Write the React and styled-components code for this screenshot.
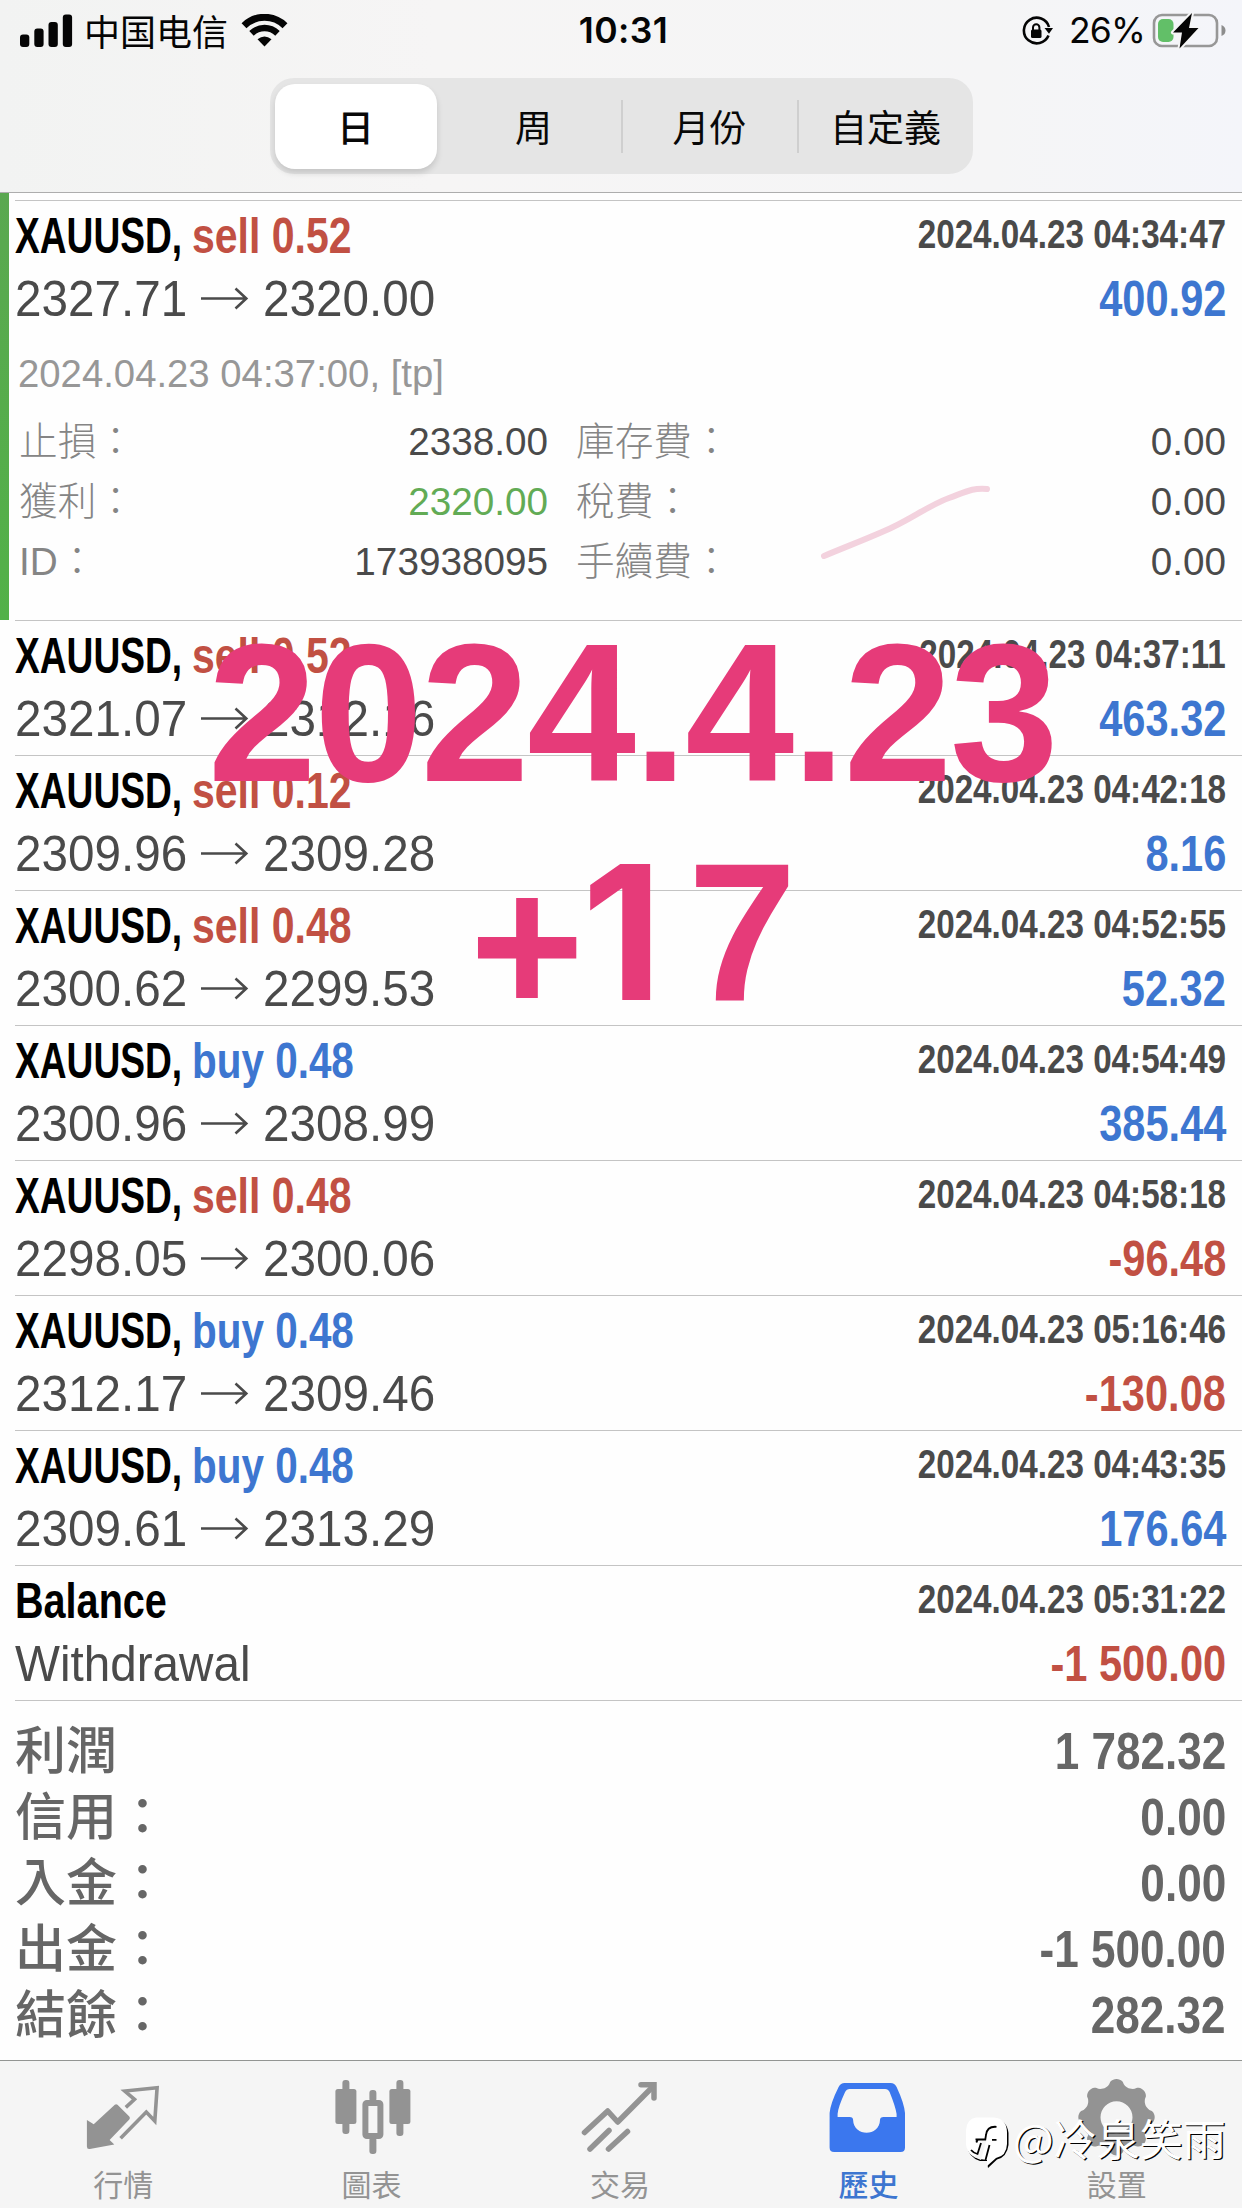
import React from 'react';
import styled, { createGlobalStyle } from 'styled-components';

const latin = '"Liberation Sans", Arial';
const TC = `${latin}, "Noto Sans CJK TC", sans-serif`;
const SC = `"Noto Sans CJK SC", ${latin}, sans-serif`;

const BLUE = '#3d76d0';
const RED = '#c15043';

const GlobalStyle = createGlobalStyle`
  * { box-sizing: border-box; }
  body { margin: 0; background: #fefefe; }
`;

const Screen = styled.main`
  position: relative;
  width: 1242px;
  height: 2208px;
  overflow: hidden;
  display: flex;
  flex-direction: column;
  background: #fefefe;
  color: #4a4a4a;
  font-family: ${TC};
  white-space: nowrap;
`;

const Header = styled.header`
  height: 193px;
  flex: none;
  background: linear-gradient(90deg, #f2f3f2 0%, #f6f5f5 35%, #f5f5f6 80%, #f4f5fa 100%);
  border-bottom: 1px solid #adadad;
`;

const StatusBar = styled.div`
  height: 62px;
  padding: 0 15px 0 20px;
  display: grid;
  grid-template-columns: 1fr auto 1fr;
  align-items: center;
  color: #050505;
`;

const StatusGroup = styled.div`
  display: flex;
  align-items: center;
  justify-content: ${(p) => (p.$end ? 'flex-end' : 'flex-start')};
`;

const Carrier = styled.span`
  font: 400 36px/60px ${SC};
  height: 62px;
  margin: 0 13px 0 11px;
`;

const Clock = styled.span`
  font: 600 35.5px/62px Inter, sans-serif;
  letter-spacing: 0.4px;
`;

const Percent = styled.span`
  font: 400 35.5px/62px Inter, sans-serif;
  letter-spacing: -0.8px;
  margin: 0 7px 0 16px;
`;

const SegmentWrap = styled.div`
  padding-top: 16px;
  display: flex;
  justify-content: center;
`;

const Segmented = styled.div`
  width: 703px;
  height: 96px;
  padding: 5px 0 5px 5px;
  display: flex;
  align-items: center;
  border-radius: 24px;
  background: #e5e5e5;
`;

const Segment = styled.button`
  height: 85px;
  flex: ${(p) => (p.$active ? '0 0 162px' : '1 1 0')};
  margin: ${(p) => (p.$active ? '0 10px 0 0' : '0')};
  border: 0;
  padding: 0;
  border-radius: 20px;
  background: ${(p) => (p.$active ? '#fff' : 'transparent')};
  box-shadow: ${(p) => (p.$active ? '0 4px 6px rgba(0,0,0,.14)' : 'none')};
  font: ${(p) => (p.$active ? 500 : 400)} 37px/81px "Noto Sans CJK TC", sans-serif;
  color: #080808;
`;

const Divider = styled.i`
  width: 2px;
  height: 53px;
  background: #cfcfcf;
`;

const History = styled.section`
  flex: none;
  padding-top: 7px;
`;

const Row = styled.article`
  margin-left: 15px;
  padding: 7px 16px 0 0;
  height: ${(p) => (p.$open ? 420 : 135)}px;
  border-top: 1px solid #c4c4c4;
`;

const Marker = styled.i`
  position: absolute;
  left: 0;
  top: 193px;
  width: 9px;
  height: 427px;
  background: linear-gradient(#5aa850, #52b148);
`;

const Line = styled.div`
  display: flex;
  justify-content: space-between;
  height: 56px;
  margin-bottom: 7px;
  line-height: 56px;
`;

const Title = styled.div`
  display: flex;
  font-size: 49.5px;
  font-weight: 700;
`;

const Symbol = styled.span`
  width: ${(p) => (p.$wide ? 'auto' : '177px')};
  color: #000;
  transform: scaleX(${(p) => (p.$wide ? 0.8 : 0.75)});
  transform-origin: left;
`;

const Deal = styled.span`
  color: ${(p) => (p.$kind === 'buy' ? BLUE : RED)};
  transform: scaleX(${(p) => (p.$kind === 'buy' ? 0.817 : 0.828)});
  transform-origin: left;
`;

const Time = styled.time`
  font-size: 40.5px;
  font-weight: 700;
  line-height: 52px;
  transform: scaleX(0.82);
  transform-origin: right;
`;

const Prices = styled.div`
  display: flex;
  font-size: 49.5px;
`;

const Price = styled.span`
  width: 186px;
  transform: scaleX(0.962);
  transform-origin: left;
`;

const ArrowBox = styled.svg`
  width: 62px;
  height: 56px;
  flex: none;
`;

const Profit = styled.span`
  font-size: 49.5px;
  font-weight: 700;
  color: ${(p) => (p.$neg ? RED : BLUE)};
  transform: scaleX(0.84);
  transform-origin: right;
`;

const Closed = styled.div`
  margin: 27px 0 18px 3px;
  font-size: 38.3px;
  line-height: 40px;
  color: #979797;
`;

const Details = styled.dl`
  margin: 0 0 0 4px;
  display: grid;
  grid-template-columns: 529px 650px;
  column-gap: 28px;
  font-size: 38.7px;
  line-height: 60px;
`;

const Detail = styled.div`
  display: flex;
  justify-content: space-between;
  height: 60px;
`;

const Label = styled.dt`
  color: #858585;
  font-weight: 300;
`;

const Value = styled.dd`
  margin: 0;
  color: ${(p) => (p.$green ? '#62ab55' : '#4a4a4a')};
`;

const Summary = styled.section`
  flex: none;
  height: 360px;
  margin-left: 15px;
  padding: 18px 16px 0 0;
  border-top: 1px solid #c4c4c4;
  color: #666;
`;

const SumRow = styled.div`
  display: flex;
  justify-content: space-between;
  height: 66px;
  line-height: 66px;
`;

const SumLabel = styled.span`
  font-size: 51px;
  font-weight: 500;
`;

const SumValue = styled.span`
  font-size: 52.5px;
  font-weight: 700;
  line-height: 64px;
  transform: scaleX(0.84);
  transform-origin: right;
`;

const TabBar = styled.nav`
  height: 148px;
  flex: none;
  display: grid;
  grid-template-columns: repeat(5, 1fr);
  background: #f5f5f5;
  border-top: 1px solid #939593;
`;

const Tab = styled.a`
  display: flex;
  flex-direction: column;
  align-items: center;
  padding-top: 17px;
  color: ${(p) => (p.$active ? BLUE : '#939393')};
  font-size: 30px;
  font-weight: ${(p) => (p.$active ? 500 : 400)};
  line-height: 50px;
`;

const TabLabel = styled.span`
  margin: 3px 2px 0 0;
`;

const Icon = styled.svg`
  width: 80px;
  height: 80px;
  flex: none;
`;

const Caption = styled.div`
  position: absolute;
  left: 11px;
  top: 604px;
  width: 100%;
  text-align: center;
  font: 700 196px/219px ${latin}, sans-serif;
  letter-spacing: -2.600px;
  color: #e63b79;
`;

const CaptionLine = styled.div`
  height: 219px;
`;

const Plus = styled.span`
  display: inline-block;
  transform: translateY(13px);
`;

const One = styled.span`
  display: inline-block;
  width: 106px;
  text-align: left;
  font: 700 187px/219px Inter, sans-serif;
`;

const Stroke = styled.svg`
  position: absolute;
  left: 815px;
  top: 480px;
  width: 180px;
  height: 85px;
`;

const Watermark = styled.div`
  position: absolute;
  left: 963px;
  top: 2107px;
  display: flex;
  align-items: center;
  color: #fff;
  font: 400 43px/60px ${SC};
  text-shadow: 1.3px 1.3px 0 #000;
`;

const Handle = styled.span`
  margin-left: 2px;
  margin-bottom: 3px;
`;

const SignalIcon = () => (
  <svg width="53" height="34" viewBox="0 0 53 34">
    {[[0, 20], [14.3, 14], [28.5, 7.5], [42.8, 0]].map(([x, y]) => (
      <rect key={x} x={x} y={y + 0.5} width="9.3" height={32.5 - y} rx="3" fill="#050505" />
    ))}
  </svg>
);

const WifiIcon = () => (
  <svg width="47" height="34" viewBox="0 0 47 34" fill="none" stroke="#050505">
    <path d="M3 11.7C14.5 .5 32.500 .5 44 11.700" strokeWidth="7" />
    <path d="M10.500 19.400C18 12.300 29 12.300 36.500 19.400" strokeWidth="6.500" />
    <path d="M16.500 25.300Q23.500 19.500 30.500 25.300L23.500 32.500Z" fill="#050505" stroke="none" />
  </svg>
);

const LockIcon = () => (
  <svg width="32" height="32" viewBox="0 0 32 32" fill="none" stroke="#050505" strokeWidth="2.600">
    <path d="M27.500 20.500A12.800 12.800 0 1 1 28 12" />
    <path d="M23.500 13H32L28 18.800Z" fill="#050505" stroke="none" />
    <rect x="10" y="14.500" width="10.500" height="8.500" rx="1.500" fill="#050505" stroke="none" />
    <path d="M12 15V12.500a3.200 3.200 0 0 1 6.400 0V15" strokeWidth="2" />
  </svg>
);

const BatteryIcon = () => (
  <svg width="75" height="36" viewBox="0 0 75 36">
    <rect x="2" y="2" width="63" height="31" rx="8" fill="none" stroke="#979797" strokeWidth="2.600" />
    <path d="M69.500 12q4 1.500 4 5.500t-4 5.500Z" fill="#8d8d8d" />
    <rect x="6" y="6" width="15.500" height="23" rx="5" fill="#62bf68" />
    <path d="M40 0L21 19.500H30L27.500 35.500L46.500 15H37Z" fill="#050505" stroke="#f5f5f6" strokeWidth="4" paintOrder="stroke" strokeLinejoin="round" />
  </svg>
);

const Arrow = () => (
  <ArrowBox viewBox="0 0 62 56" fill="none" stroke="#4a4a4a" strokeWidth="2.600">
    <path d="M0 27.500H45M34.500 17.500L45.300 27.500L34.500 37.500" />
  </ArrowBox>
);

const gearPath = (() => {
  const pts = [];
  for (let i = 0; i < 144; i += 1) {
    const a = (i / 144) * Math.PI * 2;
    const c = Math.cos(8 * a);
    const r = 34.8 + 3.4 * Math.sign(c) * Math.abs(c) ** 0.65;
    pts.push(`${(38.5 + r * Math.sin(a)).toFixed(2)} ${(39.2 - r * Math.cos(a)).toFixed(2)}`);
  }
  return `M${pts.join('L')}ZM54.500 39.200a16 16 0 1 0-32 0a16 16 0 1 0 32 0Z`;
})();

const QuotesIcon = () => (
  <Icon viewBox="84.2 2078 80 80">
    <path d="M87.100 2120L93.900 2124.300L115 2104.800Q116.400 2103.500 117.700 2104.800L129.500 2116.500Q130.800 2118 129.500 2119.500L109.800 2140L114.500 2144.500L90 2149Q87.100 2149.500 87.100 2146.500Z" fill="currentColor" />
    <path d="M126 2107.300L134.700 2099.300L125 2091L157.300 2087.700L155 2121L146.500 2112L120.800 2138.300" fill="none" stroke="currentColor" strokeWidth="3.600" />
  </Icon>
);

const ChartIcon = () => (
  <Icon viewBox="332.6 2078 80 80" fill="currentColor">
    <rect x="342" y="2080" width="7" height="54" rx="3" />
    <rect x="335" y="2089" width="21" height="35" rx="2.500" />
    <rect x="396" y="2080" width="7" height="56" rx="3" />
    <rect x="389" y="2089" width="21" height="35" rx="2.500" />
    <rect x="369" y="2090" width="7" height="12" rx="3" />
    <rect x="369" y="2137" width="7" height="17" rx="3" />
    <rect x="365" y="2103" width="15" height="33" rx="1.500" fill="none" stroke="currentColor" strokeWidth="6" />
  </Icon>
);

const TradeIcon = () => (
  <Icon viewBox="581 2078 80 80" fill="none" stroke="currentColor" strokeWidth="5.500" strokeLinecap="round">
    <path d="M584.500 2132.500L607.700 2111L617.700 2122L653 2086.500" strokeLinejoin="round" />
    <path d="M641 2084.800H654V2098" />
    <path d="M609 2130.500L590 2149M627.500 2131.500L608.500 2149" />
  </Icon>
);

const HistoryIcon = () => (
  <Icon viewBox="829.4 2078 80 80">
    <path fillRule="evenodd" fill="#3b77ee" d="M830 2113Q831 2103 839 2087Q841 2083 845 2083H891Q895 2083 897 2087Q904.500 2103 905.400 2113V2147.500Q905.400 2152 901 2152H834.500Q830 2152 830 2147.500ZM850 2089Q847 2089 845.500 2092Q838.500 2107 838 2114V2117H850Q853.500 2117 853.500 2120C854 2137 880 2137 880.400 2120Q880.400 2117 884 2117H897V2114Q896 2107 890 2092Q888.500 2089 885.500 2089Z" />
  </Icon>
);

const GearIcon = () => (
  <Icon viewBox="0 0 80 80">
    <path d={gearPath} fill="currentColor" fillRule="evenodd" />
  </Icon>
);

const WatermarkLogo = () => (
  <svg width="48" height="62" viewBox="0 0 48 62">
    <path d="M14 11H32Q44 12 45.500 25V37Q44 49 34 51.500L25 60L24 53L17 53Q5 49 4 37V23Q5 12 14 11Z" fill="#000" />
    <path d="M13 9.500H31Q43.500 10.500 44 24V36Q43.500 48 33 50L24 58V52L17 51Q4 48 3 36V22Q4 10.500 13 9.500Z" fill="#fff" />
    <path d="M23.500 32L18 52L11 49L15 44L19.500 31Z" fill="#f5f5f5" />
    <path d="M33.500 18.800Q24 18 23 27L22.300 31.500H12.500M15 31L13.300 34.500M29 31.800H33.500M18 35L14.500 46Q10.500 45 8 42M22.500 52L26.500 37" fill="none" stroke="#000" strokeWidth="1.800" />
  </svg>
);

const deals = [
  ['sell', '0.52', '2024.04.23 04:37:11', '2321.07', '2312.16', '463.32'],
  ['sell', '0.12', '2024.04.23 04:42:18', '2309.96', '2309.28', '8.16'],
  ['sell', '0.48', '2024.04.23 04:52:55', '2300.62', '2299.53', '52.32'],
  ['buy', '0.48', '2024.04.23 04:54:49', '2300.96', '2308.99', '385.44'],
  ['sell', '0.48', '2024.04.23 04:58:18', '2298.05', '2300.06', '-96.48'],
  ['buy', '0.48', '2024.04.23 05:16:46', '2312.17', '2309.46', '-130.08'],
  ['buy', '0.48', '2024.04.23 04:43:35', '2309.61', '2313.29', '176.64'],
];

const details = [
  ['止損：', '2338.00'], ['庫存費：', '0.00'],
  ['獲利：', '2320.00', true], ['稅費：', '0.00'],
  ['ID：', '173938095'], ['手續費：', '0.00'],
];

const totals = [
  ['利潤', '1 782.32'],
  ['信用：', '0.00'],
  ['入金：', '0.00'],
  ['出金：', '-1 500.00'],
  ['結餘：', '282.32'],
];

const tabs = [
  ['行情', QuotesIcon],
  ['圖表', ChartIcon],
  ['交易', TradeIcon],
  ['歷史', HistoryIcon, true],
  ['設置', GearIcon],
];

function DealRow({ deal, children }) {
  const [kind, lots, time, from, to, profit] = deal;
  return (
    <Row $open={Boolean(children)}>
      <Line>
        <Title>
          <Symbol>XAUUSD,</Symbol>
          <Deal $kind={kind}>{kind} {lots}</Deal>
        </Title>
        <Time>{time}</Time>
      </Line>
      <Line>
        <Prices>
          <Price>{from}</Price>
          <Arrow />
          <Price>{to}</Price>
        </Prices>
        <Profit $neg={profit.startsWith('-')}>{profit}</Profit>
      </Line>
      {children}
    </Row>
  );
}

export default function App() {
  return (
    <Screen>
      <GlobalStyle />
      <Header>
        <StatusBar>
          <StatusGroup>
            <SignalIcon />
            <Carrier>中国电信</Carrier>
            <WifiIcon />
          </StatusGroup>
          <Clock>10:31</Clock>
          <StatusGroup $end>
            <LockIcon />
            <Percent>26%</Percent>
            <BatteryIcon />
          </StatusGroup>
        </StatusBar>
        <SegmentWrap>
          <Segmented>
            <Segment $active>日</Segment>
            <Segment>周</Segment>
            <Divider />
            <Segment>月份</Segment>
            <Divider />
            <Segment>自定義</Segment>
          </Segmented>
        </SegmentWrap>
      </Header>

      <History>
        <DealRow deal={['sell', '0.52', '2024.04.23 04:34:47', '2327.71', '2320.00', '400.92']}>
          <Closed>2024.04.23 04:37:00, [tp]</Closed>
          <Details>
            {details.map(([label, value, green]) => (
              <Detail key={label}>
                <Label>{label}</Label>
                <Value $green={green}>{value}</Value>
              </Detail>
            ))}
          </Details>
        </DealRow>
        {deals.map((deal) => (
          <DealRow key={deal[2]} deal={deal} />
        ))}
        <Row>
          <Line>
            <Title><Symbol $wide>Balance</Symbol></Title>
            <Time>2024.04.23 05:31:22</Time>
          </Line>
          <Line>
            <Prices><Price>Withdrawal</Price></Prices>
            <Profit $neg>-1 500.00</Profit>
          </Line>
        </Row>
      </History>

      <Summary>
        {totals.map(([label, value]) => (
          <SumRow key={label}>
            <SumLabel>{label}</SumLabel>
            <SumValue>{value}</SumValue>
          </SumRow>
        ))}
      </Summary>

      <TabBar>
        {tabs.map(([label, TabIcon, active]) => (
          <Tab key={label} $active={active}>
            <TabIcon />
            <TabLabel>{label}</TabLabel>
          </Tab>
        ))}
      </TabBar>

      <Marker />
      <Stroke viewBox="815 480 180 85" fill="none">
        <path d="M824 556C850 545 872 537 893 527S930 505 949 498S972 488 987 489" stroke="#f3d2de" strokeWidth="6" strokeLinecap="round" />
      </Stroke>
      <Caption>
        <CaptionLine>2024.4.23</CaptionLine>
        <CaptionLine><Plus>+</Plus><One>1</One>7</CaptionLine>
      </Caption>
      <Watermark>
        <WatermarkLogo />
        <Handle>@冷泉笑雨</Handle>
      </Watermark>
    </Screen>
  );
}
